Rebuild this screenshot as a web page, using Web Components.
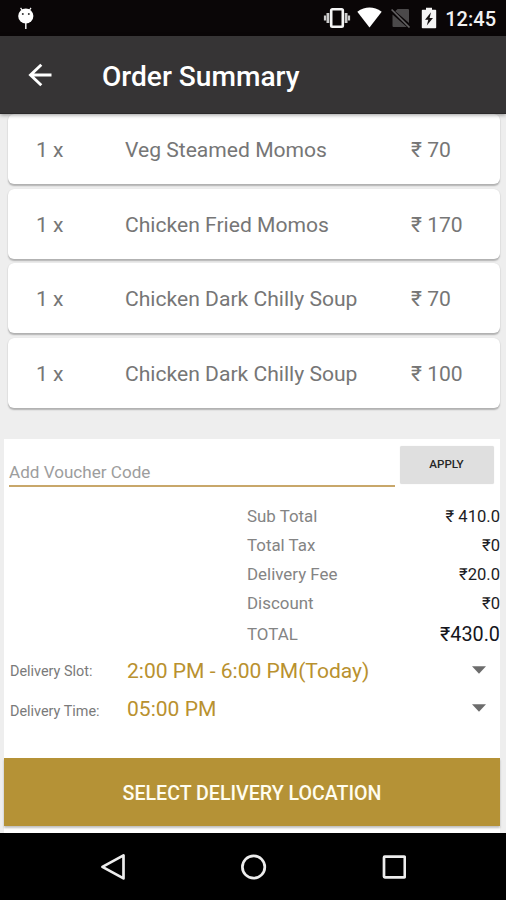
<!DOCTYPE html>
<html lang="en">
<head>
<meta charset="utf-8">
<title>Order Summary</title>
<style>
html,body{margin:0;height:900px;overflow:hidden;background:#eee;font-family:Roboto,"Noto Sans",sans-serif}
</style>
</head>
<body>
<order-screen></order-screen>
<script>
const define = (name, html) => {
  const tpl = document.createElement('template');
  tpl.innerHTML = html;
  customElements.define(name, class extends HTMLElement {
    constructor() {
      super();
      this.attachShadow({mode: 'open'}).append(tpl.content.cloneNode(true));
    }
  });
};

define('status-bar', `
<style>
:host{display:flex;height:35.5px;background:#0a0607;color:#f2f2f2;align-items:center;box-sizing:border-box;padding:0 10px 0 17px}
svg{display:block;flex:none}
.space{flex:1}
span{font-size:20px;font-weight:500;line-height:24px;padding-top:3px}
</style>
<svg width="18" height="24" viewBox="0 0 18 24" style="margin-top:1px"><path d="M3.6 1.8l2 3M14 1.8l-2 3" stroke="#fff" stroke-width="1.2"/><ellipse cx="8.8" cy="10" rx="7.6" ry="7.5" fill="#fff"/><path d="M8.8 17v6" stroke="#eee" stroke-width="1.5"/><circle cx="5.8" cy="8" r="1" fill="#333"/><circle cx="11.8" cy="8" r="1" fill="#333"/></svg>
<div class="space"></div>
<svg width="28" height="22" viewBox="0 0 28 22" style="margin-right:6px"><g fill="none" stroke="#f5f5f5"><rect x="8.2" y="2.2" width="11.6" height="17.6" rx="1.2" stroke-width="2.6"/><path d="M4.9 6v10M23.1 6v10" stroke-width="2.8" stroke="#ccc"/><path d="M2 8.5v5M26 8.500v5" stroke-width="2.200" stroke="#ccc"/></g></svg>
<svg width="25" height="21" viewBox="0 0 25 21" style="margin-right:8px"><path d="M.3 4.8Q12.5-3.6 24.7 4.8L12.5 20.5z" fill="#fff"/></svg>
<svg width="21" height="22" viewBox="0 0 21 22" style="margin-right:10px"><path d="M7.5 2H18q1 0 1 1V16L5.3 4.3zM2.5 7.500L16.800 20H3.500q-1 0-1-1z" fill="#4b494a"/><path d="M1.600 2.500L19.500 20.500" stroke="#656364" stroke-width="1.700"/></svg>
<svg width="16" height="22" viewBox="0 0 16 22" style="margin-right:8.500px"><path d="M5 .8h6v2h3.400q.8 0 .8.8v16.800q0 .8-.8.8H1.600q-.8 0-.8-.8V3.600q0-.8.8-.8H5z" fill="#f5f5f5"/><path d="M10 5.300L4 12.800h3.300l-1.500 5.700L12 11H8.600z" fill="#171314"/></svg>
<span><slot></slot></span>
`);

define('app-bar', `
<style>
:host{display:flex;height:78.5px;box-sizing:border-box;background:#363435;color:#fff;align-items:center;padding-left:28px;border-bottom:1px solid #2a2829;box-shadow:0 1px 4px rgba(0,0,0,.4);position:relative;z-index:1}
svg{flex:none;margin-top:2px}
h1{margin:0 0 0 50px;font-size:28.1px;line-height:34px;font-weight:500;padding-top:6px}
</style>
<svg width="24" height="24" viewBox="0 0 24 24"><path d="M13.300 1.700L2.500 12l10.800 10.300M2.500 12H23.500" fill="none" stroke="#fff" stroke-width="2.900"/></svg>
<h1><slot></slot></h1>
`);

define('order-item', `
<style>
:host{display:grid;grid-template-columns:89px 286px 1fr;align-items:center;box-sizing:border-box;height:70px;padding:2px 0 0 28px;background:#fff;border-radius:6px;box-shadow:0 1.5px 1.500px rgba(0,0,0,.25),0 0 1px rgba(0,0,0,.08);color:#767676;font-size:21.1px;line-height:26px}
</style>
<slot name="qty"></slot><slot></slot><slot name="price"></slot>
`);

define('voucher-form', `
<style>
:host{display:flex;height:50px;align-items:flex-start}
.field{box-sizing:border-box;width:386px;height:42px;margin:6px 5px 0 5px;border-bottom:2px solid #c8a76a;color:#9d9d9d;font-size:17.1px;line-height:20px;padding-top:16.500px}
button{all:unset;box-sizing:border-box;width:94px;height:38px;margin-top:6.500px;background:#dfdfdf;border-radius:2px;box-shadow:0 0 1px rgba(0,0,0,.15);text-align:center;font-size:11.600px;font-weight:500;line-height:33px;padding-right:1px;color:#262626}
</style>
<div class="field"><slot></slot></div><button><slot name="action"></slot></button>
`);

define('total-line', `
<style>
:host{display:flex;justify-content:space-between;align-items:center;height:28.900px;margin-left:243px;font-size:16.900px;color:#848484}
.v{color:#1c1d25;font-size:16.600px;line-height:24px;padding-top:2px}
:host([grand]){height:33.500px}
:host([grand]) .v{font-size:19.800px;color:#14151c;padding:1px 0 0}
</style>
<span><slot></slot></span><span class="v"><slot name="value"></slot></span>
`);

define('picker-row', `
<style>
:host{display:flex;align-items:center;height:38px;padding:0 14px 0 6px}
.label{width:117px;font-size:14.400px;color:#7a7a7a;padding-top:var(--label-shift,0)}
.value{flex:1;font-size:21.050px;line-height:26px;color:#b9912f;margin-top:-1px}
svg{flex:none;margin-top:-3px}
</style>
<span class="label"><slot name="label"></slot></span><span class="value"><slot></slot></span>
<svg width="14" height="8" viewBox="0 0 14 8"><path d="M0 .3h14L7 7.800z" fill="#6c6c6c"/></svg>
`);

define('primary-button', `
<style>
:host{display:block;height:68px;background:#b59236;color:#fffdf0;text-align:center;font-size:19.600px;font-weight:500;line-height:72px;box-shadow:0 1.500px 2px rgba(0,0,0,.25)}
</style><slot></slot>
`);

define('nav-bar', `
<style>
:host{display:flex;height:67px;background:#000;align-items:center;padding-left:100px;box-sizing:border-box}
svg{flex:none}
g{fill:none;stroke:#ededed;stroke-width:2.700;stroke-linejoin:round}
</style>
<svg width="306" height="28" viewBox="0 0 306 28"><g><path d="M23.500 2.400v23L2.400 13.900z"/><circle cx="153.600" cy="14" r="11.200"/><rect x="284" y="3.600" width="20.800" height="20.800" rx=".8"/></g></svg>
`);

define('order-screen', `
<style>
:host{display:flex;flex-direction:column;width:506px;height:900px;background:#eee}
.items{display:flex;flex-direction:column;gap:4.600px;padding:0 6px 0 8px;height:325px;box-sizing:border-box}
.panel{display:flex;flex-direction:column;height:394px;margin:0 6px 0 4px;background:#fff}
.totals{padding-top:13px}
.pickers{padding-top:1px;height:107px;box-sizing:border-box}
</style>
<status-bar>12:45</status-bar>
<app-bar>Order Summary</app-bar>
<div class="items">
<order-item><span slot="qty">1 x</span>Veg Steamed Momos<span slot="price">₹ 70</span></order-item>
<order-item><span slot="qty">1 x</span>Chicken Fried Momos<span slot="price">₹ 170</span></order-item>
<order-item><span slot="qty">1 x</span>Chicken Dark Chilly Soup<span slot="price">₹ 70</span></order-item>
<order-item><span slot="qty">1 x</span>Chicken Dark Chilly Soup<span slot="price">₹ 100</span></order-item>
</div>
<div class="panel">
<voucher-form>Add Voucher Code<span slot="action">APPLY</span></voucher-form>
<div class="totals">
<total-line>Sub Total<span slot="value">₹ 410.0</span></total-line>
<total-line>Total Tax<span slot="value">₹0</span></total-line>
<total-line>Delivery Fee<span slot="value">₹20.0</span></total-line>
<total-line>Discount<span slot="value">₹0</span></total-line>
<total-line grand>TOTAL<span slot="value">₹430.0</span></total-line>
</div>
<div class="pickers">
<picker-row><span slot="label">Delivery Slot:</span>2:00 PM - 6:00 PM(Today)</picker-row>
<picker-row style="--label-shift:5px"><span slot="label">Delivery Time:</span>05:00 PM</picker-row>
</div>
<primary-button>SELECT DELIVERY LOCATION</primary-button>
</div>
<nav-bar></nav-bar>
`);
</script>
</body>
</html>
